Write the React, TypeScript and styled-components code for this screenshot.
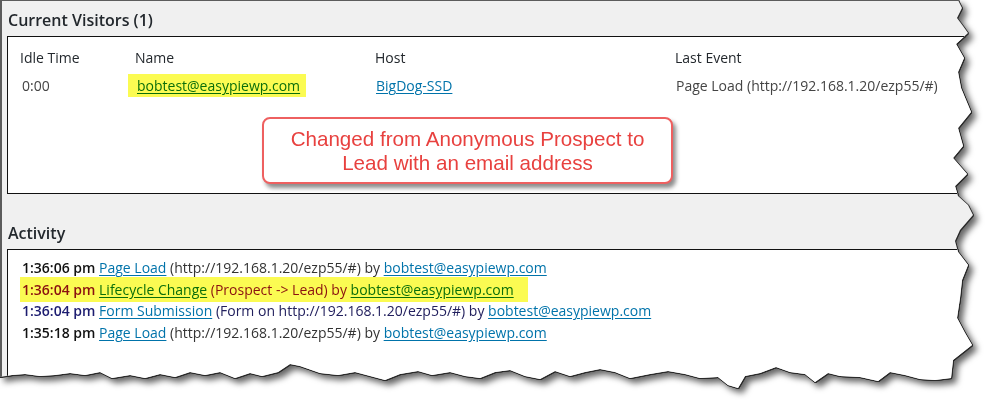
import React from "react";
import styled, { createGlobalStyle } from "styled-components";

const GlobalStyle = createGlobalStyle`
  html, body { margin: 0; padding: 0; background: #ffffff; }
  body { font-family: "Open Sans", "Noto Sans", sans-serif; }
`;

const rightEdge: [number, number][] = [
  [958, 0], [962, 8], [957, 18], [963, 26], [968, 33], [956, 44], [964, 58], [958, 72],
  [961, 88], [966, 100], [971, 112], [958, 128], [963, 146], [953, 158], [967, 174],
  [955, 186], [958, 196], [968, 205], [973, 215], [960, 230], [955, 241], [958, 252],
  [968, 265], [962, 280], [960, 298], [957, 318], [965, 333], [972, 345], [953, 360], [951, 378],
];
const bottomEdge: [number, number][] = [
  [935, 380], [920, 379], [905, 375], [890, 372], [878, 381], [860, 377], [840, 376],
  [828, 373], [815, 382], [805, 374], [790, 372], [776, 367], [760, 373], [745, 376],
  [738, 388], [728, 385], [718, 377], [700, 378], [685, 374], [668, 371], [650, 374],
  [630, 378], [615, 372], [600, 369], [585, 372], [570, 376], [555, 371], [540, 379],
  [525, 376], [510, 370], [495, 372], [480, 378], [465, 376], [450, 372], [432, 375],
  [418, 371], [400, 374], [385, 380], [370, 376], [355, 372], [338, 375], [320, 373],
  [300, 366], [290, 364], [278, 372], [262, 376], [250, 373], [235, 378], [220, 372],
  [205, 375], [190, 372], [175, 377], [160, 374], [145, 378], [130, 375], [112, 378],
  [100, 372], [85, 375], [70, 373], [55, 375], [40, 376], [25, 374], [12, 375], [0, 377],
];
const tornClip = `polygon(0px 0px, ${[...rightEdge, ...bottomEdge]
  .map(([x, y]) => `${x}px ${y}px`)
  .join(", ")})`;

const Frame = styled.div`
  width: 998px;
  height: 411px;
  filter: drop-shadow(1px 0 0 #2a2a2a) drop-shadow(0 1px 0 #2a2a2a)
    drop-shadow(4px 4px 3px rgba(0, 0, 0, 0.6));
`;

const Sheet = styled.div`
  box-sizing: border-box;
  width: 980px;
  height: 395px;
  background: #f0f0f0;
  border-left: 2px solid #5c5c5c;
  border-top: 1px solid #5c5c5c;
  padding: 0 0 0 5px;
`;

const SectionTitle = styled.h2<{ $top: number }>`
  margin: 0;
  padding: ${(p) => p.$top}px 0 0 1px;
  height: 22px;
  font-size: 16px;
  font-weight: 600;
  line-height: 22px;
  color: #23282d;
`;

const Panel = styled.div<{ $height: number; $mt: number }>`
  position: relative;
  box-sizing: border-box;
  margin-top: ${(p) => p.$mt}px;
  width: 990px;
  height: ${(p) => p.$height}px;
  background: #ffffff;
  border: 1px solid #111111;
`;

const VisitorGrid = styled.div`
  display: grid;
  grid-template-columns: 115px 240px 300px 1fr;
  grid-auto-rows: 28px;
  padding: 7px 0 0 12px;
  font-size: 14px;
  line-height: 28px;
`;

const HeadCell = styled.div`
  color: #23282d;
  font-weight: 500;
`;

const Cell = styled.div<{ $shift?: number }>`
  color: #444444;
  padding-left: ${(p) => p.$shift ?? 0}px;
`;

const Link = styled.a<{ $tone?: "blue" | "green" }>`
  color: ${(p) => (p.$tone === "green" ? "#0a6e0a" : "#0073aa")};
  text-decoration: underline;
  text-underline-offset: 2px;
  cursor: pointer;
`;

const Marker = styled.span`
  background: #fbfb52;
  padding: 2px 6px 2px 9px;
  margin-left: -9px;
`;

const Callout = styled.div`
  position: absolute;
  left: 254px;
  top: 80px;
  box-sizing: border-box;
  width: 411px;
  height: 67px;
  border: 2px solid #ee6060;
  border-radius: 8px;
  background: #ffffff;
  box-shadow: 3px 4px 4px rgba(0, 0, 0, 0.45);
  display: flex;
  align-items: center;
  justify-content: center;
  text-align: center;
  font-family: "Liberation Sans", Arial, sans-serif;
  font-size: 20.6px;
  line-height: 24px;
  color: #e8413f;
  padding-top: 1px;
`;

const ActivityList = styled.div`
  padding: 7px 0 0 14px;
  font-size: 14px;
  line-height: 21.6px;
  color: #333333;
`;

type Tone = "plain" | "alert" | "info";

const ActivityRow = styled.div<{ $tone: Tone }>`
  white-space: nowrap;
  color: ${(p) => (p.$tone === "alert" ? "#8a1010" : p.$tone === "info" ? "#22205e" : "#333333")};
`;

const RowMark = styled.span`
  background: #fbfb52;
  padding: 3px 14px 3px 2px;
  margin-left: -2px;
`;

const Time = styled.b<{ $tone: Tone }>`
  font-weight: 600;
  color: ${(p) => (p.$tone === "alert" ? "#8a1010" : p.$tone === "info" ? "#1c1c70" : "#111111")};
`;

const activity: { time: string; event: string; detail: string; tone: Tone }[] = [
  { time: "1:36:06 pm", event: "Page Load", detail: "(http://192.168.1.20/ezp55/#)", tone: "plain" },
  { time: "1:36:04 pm", event: "Lifecycle Change", detail: "(Prospect -> Lead)", tone: "alert" },
  { time: "1:36:04 pm", event: "Form Submission", detail: "(Form on http://192.168.1.20/ezp55/#)", tone: "info" },
  { time: "1:35:18 pm", event: "Page Load", detail: "(http://192.168.1.20/ezp55/#)", tone: "plain" },
];

export default function App() {
  return (
    <>
      <GlobalStyle />
      <Frame>
        <Sheet style={{ clipPath: tornClip }}>
          <SectionTitle $top={8}>Current Visitors (1)</SectionTitle>
          <Panel $height={158} $mt={5}>
            <VisitorGrid>
              <HeadCell>Idle Time</HeadCell>
              <HeadCell>Name</HeadCell>
              <HeadCell>Host</HeadCell>
              <HeadCell>Last Event</HeadCell>
              <Cell $shift={2}>0:00</Cell>
              <Cell $shift={2}>
                <Marker>
                  <Link $tone="green">bobtest@easypiewp.com</Link>
                </Marker>
              </Cell>
              <Cell $shift={1}>
                <Link>BigDog-SSD</Link>
              </Cell>
              <Cell $shift={1}>Page Load (http://192.168.1.20/ezp55/#)</Cell>
            </VisitorGrid>
            <Callout>
              Changed from Anonymous Prospect to
              <br />
              Lead with an email address
            </Callout>
          </Panel>
          <SectionTitle $top={28}>Activity</SectionTitle>
          <Panel $height={150} $mt={5}>
            <ActivityList>
              {activity.map((a, i) => {
                const body = (
                  <>
                    <Time $tone={a.tone}>{a.time}</Time>{" "}
                    <Link $tone={a.tone === "alert" ? "green" : "blue"}>{a.event}</Link> {a.detail} by{" "}
                    <Link $tone={a.tone === "alert" ? "green" : "blue"}>bobtest@easypiewp.com</Link>
                  </>
                );
                return (
                  <ActivityRow key={i} $tone={a.tone}>
                    {a.tone === "alert" ? <RowMark>{body}</RowMark> : body}
                  </ActivityRow>
                );
              })}
            </ActivityList>
          </Panel>
        </Sheet>
      </Frame>
    </>
  );
}
